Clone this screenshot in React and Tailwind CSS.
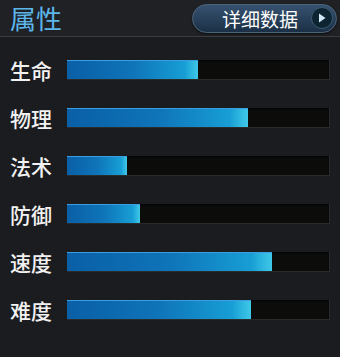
import { Fragment } from "react";

const stats = [
  { label: "生命", fill: 131 },
  { label: "物理", fill: 181 },
  { label: "法术", fill: 60 },
  { label: "防御", fill: 73 },
  { label: "速度", fill: 205 },
  { label: "难度", fill: 184 },
];

const StatBar = ({ label, fill }) => (
  <div className="flex items-center h-[20px]">
    <div className="w-[67px] pl-[10px] text-[21px] leading-none text-[#f2f2f2] font-medium">{label}</div>
    <div className="relative w-[263px] h-[20px] bg-[#0c0d0b] border-b border-r border-[#2a2b2c] shadow-[inset_0_1px_2px_rgba(0,0,0,0.8)]">
      <div
        className="h-full bg-gradient-to-r from-[#0a5fa6] via-[#0f74b8] to-[#1ba9dc] border-t border-[#3a9ee0]"
        style={{ width: fill }}
      >
        <div className="h-full w-full bg-gradient-to-r from-transparent from-90% to-[#4fd4ec] opacity-70" />
      </div>
    </div>
  </div>
);

export default function App() {
  return (
    <div
      className="w-[340px] h-[357px] bg-[#1b1c20] overflow-hidden"
      style={{ fontFamily: '"Noto Sans CJK SC", "Noto Sans", sans-serif' }}
    >
      <div className="h-[37px] flex items-center justify-between bg-[#1f2125] border-b border-[#3a3c40]">
        <div className="pl-[10px] text-[26px] leading-none text-[#5cb6ea]">属性</div>
        <button className="mr-[3px] w-[145px] h-[29px] rounded-full bg-gradient-to-b from-[#365270] to-[#1b3046] border border-[#4c6478] flex items-center justify-end pr-[3px] gap-[13px] shadow-[0_1px_2px_rgba(0,0,0,0.6)]">
          <span className="text-[19px] leading-none text-white">详细数据</span>
          <span className="w-[22px] h-[22px] rounded-full bg-[#0d2433] border border-[#3a5a70] flex items-center justify-center">
            <svg width="8" height="10" viewBox="0 0 8 10">
              <path d="M1 0.5 L7.5 5 L1 9.5 Z" fill="#cfeaf5" />
            </svg>
          </span>
        </button>
      </div>
      <div className="pt-[23px] flex flex-col gap-[28px]">
        {stats.map((s) => (
          <Fragment key={s.label}>
            <StatBar {...s} />
          </Fragment>
        ))}
      </div>
    </div>
  );
}
